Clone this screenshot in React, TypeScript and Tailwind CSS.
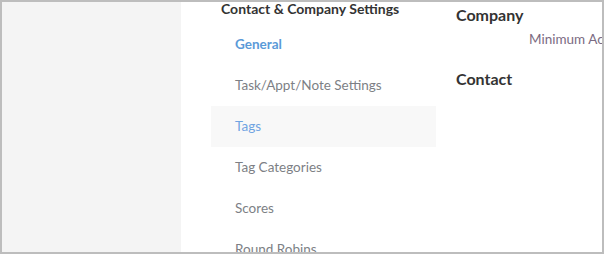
import clsx from 'clsx'

const items = [
  { label: 'General', active: true },
  { label: 'Task/Appt/Note Settings' },
  { label: 'Tags', hover: true },
  { label: 'Tag Categories' },
  { label: 'Scores' },
  { label: 'Round Robins' },
]

export default function App() {
  return (
    <div
      className="w-[604px] h-[254px] border-2 border-[#bdbdbd] bg-white flex overflow-hidden"
      style={{ fontFamily: 'Lato, "Open Sans", sans-serif' }}
    >
      {/* Sidebar */}
      <div className="w-[179px] shrink-0 bg-[#f4f4f4]" />

      <div className="flex pl-[30px]">
        {/* Settings nav */}
        <div className="w-[225px] shrink-0">
          <div className="h-[22px] pl-[10px] text-[14px] leading-[14px] font-bold text-[#333]">
            Contact &amp; Company Settings
          </div>
          {items.map((item) => (
            <div
              key={item.label}
              className={clsx(
                'h-[41px] flex items-center pl-[24px] text-[13.5px]',
                item.hover && 'bg-[#f8f8f8]',
                item.active
                  ? 'font-bold text-[#5a9ad8]'
                  : item.hover
                    ? 'text-[#70a4e2]'
                    : 'text-[#7d7f85]'
              )}
            >
              {item.label}
            </div>
          ))}
        </div>

        {/* Right column */}
        <div className="pl-[20px] w-[200px]">
          <div className="mt-[3px] text-[16px] leading-[20px] font-bold text-[#333]">Company</div>
          <div className="mt-[5px] pl-[73px] text-[13.5px] leading-[18px] text-[#7b6b82] whitespace-nowrap">
            Minimum Access
          </div>
          <div className="mt-[21px] text-[16px] leading-[20px] font-bold text-[#333]">Contact</div>
        </div>
      </div>
    </div>
  )
}
